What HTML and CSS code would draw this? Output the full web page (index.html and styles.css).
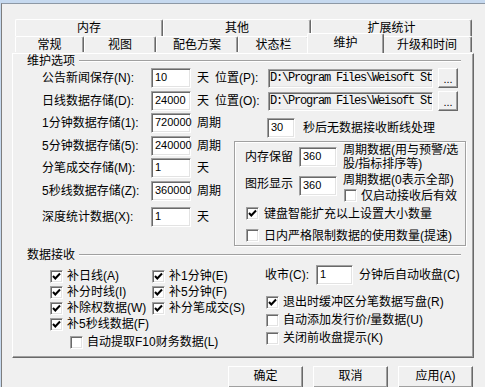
FILE: index.html
```html
<!DOCTYPE html>
<html lang="zh-CN">
<head>
    <meta charset="UTF-8">
    <meta name="viewport" content="width=device-width, initial-scale=1.0">
    <title>系统设置</title>
    <link rel="stylesheet" href="styles.css">
</head>
<body>
<div class="dlg">
  <div class="frame">
    <div class="tabs">
      <div class="tabrow row1">
        <div class="tab t-mem">内存</div>
        <div class="tab t-oth">其他</div>
        <div class="tab t-ext">扩展统计</div>
      </div>
      <div class="tabrow row2">
        <div class="tab t-gen">常规</div>
        <div class="tab t-view">视图</div>
        <div class="tab t-color">配色方案</div>
        <div class="tab t-stat">状态栏</div>
        <div class="tab t-keep on">维护</div>
        <div class="tab t-upd">升级和时间</div>
      </div>
    </div>

    <div class="panel">
      <div class="ghead"><span>维护选项</span><i></i></div>

      <div class="frow">
        <span class="lbl">公告新闻保存(N):</span>
        <span class="edit">10</span>
        <span class="unit">天</span>
        <span class="loc">位置(P):</span>
        <span class="path">D:\Program Files\Weisoft St</span>
        <span class="dots">...</span>
      </div>
      <div class="frow mt3">
        <span class="lbl">日线数据存储(D):</span>
        <span class="edit">24000</span>
        <span class="unit">天</span>
        <span class="loc">位置(O):</span>
        <span class="path">D:\Program Files\Weisoft St</span>
        <span class="dots">...</span>
      </div>

      <div class="split">
        <div class="leftcol">
          <div class="frow">
            <span class="lbl">1分钟数据存储(1):</span>
            <span class="edit">720000</span>
            <span class="unit">周期</span>
          </div>
          <div class="frow mt3">
            <span class="lbl">5分钟数据存储(5):</span>
            <span class="edit">240000</span>
            <span class="unit">周期</span>
          </div>
          <div class="frow mt2">
            <span class="lbl">分笔成交存储(M):</span>
            <span class="edit">1</span>
            <span class="unit">天</span>
          </div>
          <div class="frow mt3">
            <span class="lbl">5秒线数据存储(Z):</span>
            <span class="edit">360000</span>
            <span class="unit">周期</span>
          </div>
          <div class="frow mt6">
            <span class="lbl">深度统计数据(X):</span>
            <span class="edit">1</span>
            <span class="unit">天</span>
          </div>
        </div>

        <div class="rightcol">
          <div class="tmo">
            <span class="edit w27">30</span>
            <span class="tmo-txt">秒后无数据接收断线处理</span>
          </div>
          <div class="mem">
            <div class="mrow">
              <span class="mlbl">内存保留</span>
              <span class="edit w38">360</span>
              <div class="mtxt">
                <span>周期数据(用与预警/选</span>
                <span>股/指标排序等)</span>
              </div>
            </div>
            <div class="mrow2">
              <span class="mlbl2">图形显示</span>
              <span class="edit w38 mt2">360</span>
              <div class="mcol">
                <span class="mline">周期数据(0表示全部)</span>
                <label class="chk sub"><span class="cb"></span>仅启动接收后有效</label>
              </div>
            </div>
            <label class="chk inbox mt5"><span class="cb"><svg viewBox="0 0 11 11"><path d="M2 5l2.3 2.5L9 2.5"/></svg></span>键盘智能扩充以上设置大小数量</label>
            <label class="chk inbox mt9"><span class="cb"></span>日内严格限制数据的使用数量(提速)</label>
          </div>
        </div>
      </div>

      <div class="ghead mt2"><span>数据接收</span><i></i></div>

      <div class="recv">
        <div class="recv-left">
          <div class="cbgrid">
            <label class="chk"><span class="cb"><svg viewBox="0 0 11 11"><path d="M2 5l2.3 2.5L9 2.5"/></svg></span>补日线(A)</label>
            <label class="chk"><span class="cb"><svg viewBox="0 0 11 11"><path d="M2 5l2.3 2.5L9 2.5"/></svg></span>补1分钟(E)</label>
            <label class="chk"><span class="cb"><svg viewBox="0 0 11 11"><path d="M2 5l2.3 2.5L9 2.5"/></svg></span>补分时线(I)</label>
            <label class="chk"><span class="cb"><svg viewBox="0 0 11 11"><path d="M2 5l2.3 2.5L9 2.5"/></svg></span>补5分钟(F)</label>
            <label class="chk"><span class="cb"><svg viewBox="0 0 11 11"><path d="M2 5l2.3 2.5L9 2.5"/></svg></span>补除权数据(W)</label>
            <label class="chk"><span class="cb"><svg viewBox="0 0 11 11"><path d="M2 5l2.3 2.5L9 2.5"/></svg></span>补分笔成交(S)</label>
            <label class="chk"><span class="cb"><svg viewBox="0 0 11 11"><path d="M2 5l2.3 2.5L9 2.5"/></svg></span>补5秒线数据(F)</label>
          </div>
          <label class="chk f10"><span class="cb"></span>自动提取F10财务数据(L)</label>
        </div>

        <div class="recv-right">
          <div class="close-row">
            <span class="clbl">收市(C):</span>
            <span class="edit w37">1</span>
            <span class="ctxt">分钟后自动收盘(C)</span>
          </div>
          <div class="rchecks">
            <label class="chk row18"><span class="cb"><svg viewBox="0 0 11 11"><path d="M2 5l2.3 2.5L9 2.5"/></svg></span>退出时缓冲区分笔数据写盘(R)</label>
            <label class="chk row18"><span class="cb"></span>自动添加发行价/量数据(U)</label>
            <label class="chk row18"><span class="cb"></span>关闭前收盘提示(K)</label>
          </div>
        </div>
      </div>
    </div>

    <div class="btns">
      <span class="btn def">确定</span>
      <span class="btn">取消</span>
      <span class="btn">应用(A)</span>
    </div>
  </div>
</div>
</body>
</html>
```

FILE: styles.css
```css
* {
    box-sizing: border-box;
}
body {
    margin: 0;
    background: #f0f0f0;
    font: 12px/14px "Liberation Sans", "Noto Sans CJK SC", sans-serif;
    color: #000;
    overflow: hidden;
}
.dlg {
    width: 485px;
    height: 387px;
    border-top: 3px solid #c6d9ef;
    border-left: 1px solid #c6d9ef;
    overflow: hidden;
}
.frame {
    height: 100%;
    border-top: 1px solid #8d98a5;
    border-left: 1px solid #7d7d7d;
}

/* tabs */
.tabs {
    margin: 15px 0 0 13px;
}
.tabrow {
    display: flex;
}
.tab {
    display: flex;
    align-items: center;
    justify-content: center;
    background: #f0f0f0;
    border-top: 1px solid #fff;
    border-left: 1px solid #fff;
    border-right: 1px solid #696969;
    box-shadow: inset -1px 0 #a0a0a0;
    border-radius: 2px 2px 0 0;
}
.row1 .tab { height: 17px; }
.row2 .tab { height: 16px; }
.row2 .tab.on {
    height: 20px;
    margin: -3px -2px 0;
    padding-bottom: 2px;
    position: relative;
    z-index: 1;
}
.t-mem, .t-oth { width: 148px; }
.t-ext { width: 161px; }
.t-gen { width: 69px; }
.t-view { width: 72px; }
.t-color { width: 82px; }
.t-stat { width: 71px; }
.t-keep { width: 77px; }
.t-upd { width: 90px; }

/* page panel */
.panel {
    margin-left: 10px;
    width: 462px;
    height: 305px;
    border: 1px solid;
    border-color: #fff #696969 #696969 #fff;
    box-shadow: inset -1px -1px #a0a0a0;
}
.ghead {
    display: flex;
    align-items: center;
    height: 14px;
    padding: 0 12px 0 14px;
}
.ghead span {
    padding-right: 4px;
}
.ghead i {
    flex: 1;
    border-top: 1px solid #a0a0a0;
    border-bottom: 1px solid #fff;
}

.mt2 { margin-top: 2px; }
.mt3 { margin-top: 3px; }
.mt5 { margin-top: 5px; }
.mt6 { margin-top: 6px; }
.mt9 { margin-top: 9px; }

.frow {
    display: flex;
    align-items: center;
    height: 20px;
    padding-left: 29px;
    white-space: nowrap;
}
.lbl {
    width: 109px;
}
.edit {
    flex: none;
    display: block;
    width: 40px;
    height: 20px;
    padding-left: 3px;
    background: #fff;
    border: 1px solid;
    border-color: #a0a0a0 #fff #fff #a0a0a0;
    box-shadow: inset 1px 1px #696969, inset -1px -1px #e3e3e3;
    font: 11px/16px "Liberation Sans", Arial, sans-serif;
}
.w27 { width: 28px; }
.w37 { width: 37px; }
.w38 { width: 38px; }
.unit {
    margin-left: 6px;
    width: 18px;
}
.loc {
    width: 53px;
}
.path {
    width: 165px;
    height: 19px;
    padding-left: 1px;
    overflow: hidden;
    border: 1px solid;
    border-color: #a0a0a0 #fff #fff #a0a0a0;
    box-shadow: inset 1px 1px #696969, inset -1px -1px #e3e3e3;
    font: 12px/17px "Liberation Mono", monospace;
    letter-spacing: -1.2px;
}
.dots {
    width: 20px;
    height: 20px;
    margin-left: 5px;
    text-align: center;
    border: 1px solid;
    border-color: #fff #696969 #696969 #fff;
    box-shadow: inset -1px -1px #a0a0a0;
    font: 11px/20px "Liberation Sans", sans-serif;
}

.split {
    display: grid;
    grid-template-columns: 221px 232px;
    margin-top: 2px;
}
.tmo {
    display: flex;
    align-items: center;
    height: 20px;
    margin-top: 5px;
    padding-left: 33px;
}
.tmo-txt {
    margin-left: 8px;
    white-space: nowrap;
}
.mem {
    margin-top: 3px;
    height: 105px;
    padding-left: 10px;
    border: 1px solid #a0a0a0;
    box-shadow: inset 1px 1px #fff, 1px 1px #fff;
}
.mrow {
    display: flex;
    align-items: center;
    height: 28px;
    margin-top: 1px;
}
.mlbl, .mlbl2 {
    width: 54px;
    white-space: nowrap;
}
.mtxt {
    display: flex;
    flex-direction: column;
    margin-left: 6px;
    line-height: 14px;
    white-space: nowrap;
}
.mrow2 {
    display: flex;
    align-items: flex-start;
    height: 28px;
    margin-top: 3px;
}
.mlbl2 {
    margin-top: 1px;
    line-height: 18px;
}
.mcol {
    margin-left: 6px;
    display: flex;
    flex-direction: column;
}
.mline {
    line-height: 12px;
    white-space: nowrap;
}

/* check boxes */
.chk {
    display: flex;
    align-items: center;
    height: 16px;
    white-space: nowrap;
}
.cb {
    flex: none;
    width: 13px;
    height: 13px;
    margin-right: 4px;
    background: #fff;
    border: 1px solid;
    border-color: #a0a0a0 #fff #fff #a0a0a0;
    box-shadow: inset 1px 1px #696969, inset -1px -1px #e3e3e3;
}
.cb svg {
    display: block;
    width: 11px;
    height: 11px;
    fill: none;
    stroke: #000;
    stroke-width: 2;
}
.chk.sub {
    height: 13px;
    margin-top: 3px;
    margin-left: 1px;
}
.chk.inbox {
    height: 13px;
    padding-left: 1px;
}
.chk.inbox .cb {
    margin-right: 5px;
}

.recv {
    display: grid;
    grid-template-columns: 252px 1fr;
}
.recv-left {
    padding-left: 37px;
}
.cbgrid {
    display: grid;
    grid-template-columns: 102px auto;
    margin-top: 6px;
}
.f10 {
    margin-top: 2px;
    padding-left: 20px;
}
.close-row {
    display: flex;
    align-items: center;
    height: 20px;
    margin-top: 3px;
    white-space: nowrap;
}
.clbl {
    width: 51px;
}
.ctxt {
    margin-left: 6px;
}
.rchecks {
    margin-top: 8px;
    padding-left: 1px;
}
.row18 {
    height: 18px;
}

/* dialog buttons */
.btns {
    display: flex;
    gap: 10px;
    margin-top: 8px;
    padding-left: 226px;
}
.btn {
    width: 75px;
    height: 22px;
    text-align: center;
    line-height: 19px;
    border: 1px solid;
    border-color: #fff #696969 #696969 #fff;
    box-shadow: inset -1px -1px #a0a0a0;
}
```
